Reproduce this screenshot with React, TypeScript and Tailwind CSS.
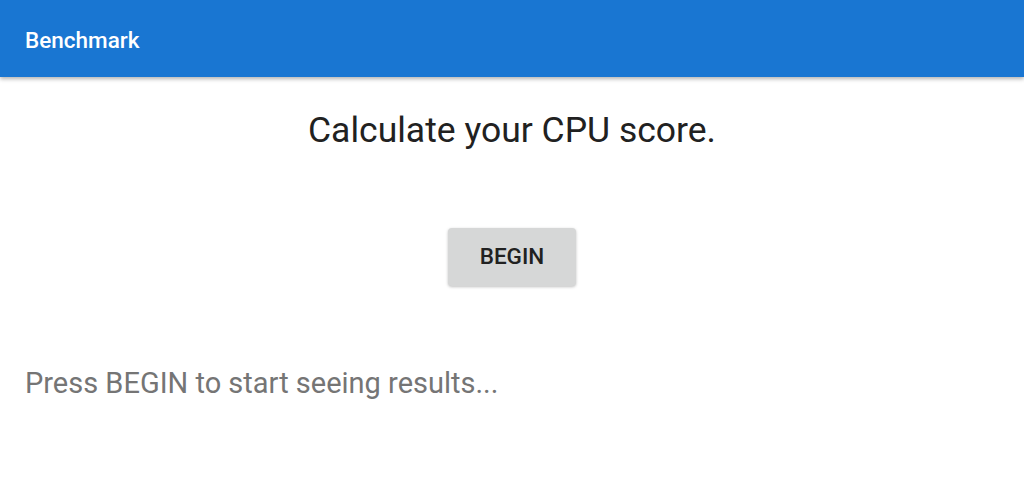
export default function App() {
  return (
    <div className="min-h-[500px] bg-white font-['Roboto',sans-serif]">
      <header className="h-[77px] bg-[#1976d2] shadow-[0_2px_4px_rgba(0,0,0,0.3)] flex items-center px-[25px] pt-[5px]">
        <h1 className="text-[22.5px] font-medium text-white">Benchmark</h1>
      </header>

      <main className="flex flex-col">
        <h2 className="mt-[31px] text-center text-[35.5px] leading-[44px] text-[#212121]">
          Calculate your CPU score.
        </h2>

        <div className="mt-[76px] flex justify-center">
          <button className="w-[128px] h-[58px] rounded-[4px] bg-[#d6d7d7] text-[22.5px] font-medium text-[#212121] shadow-[0_1px_3px_rgba(0,0,0,0.25)]">
            BEGIN
          </button>
        </div>

        <p className="mt-[79px] px-[25px] text-[29px] leading-[36px] text-[#757575]">
          Press BEGIN to start seeing results...
        </p>
      </main>
    </div>
  );
}
